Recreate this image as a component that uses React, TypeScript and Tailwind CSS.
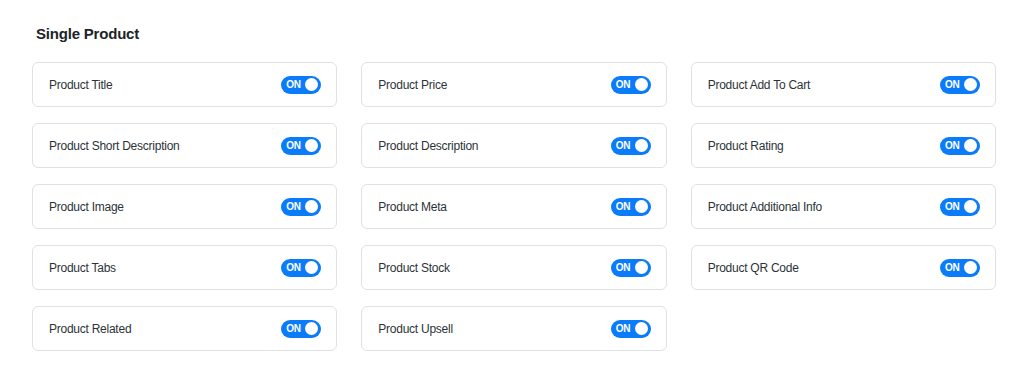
import React from 'react';

const items = [
  'Product Title',
  'Product Price',
  'Product Add To Cart',
  'Product Short Description',
  'Product Description',
  'Product Rating',
  'Product Image',
  'Product Meta',
  'Product Additional Info',
  'Product Tabs',
  'Product Stock',
  'Product QR Code',
  'Product Related',
  'Product Upsell',
];

const Toggle: React.FC = () => (
  <div className="flex h-[18px] w-10 items-center justify-between rounded-full bg-[#0b7cf9] pl-[5px] pr-[3px]">
    <span className="text-[10px] font-bold leading-none tracking-[-0.3px] text-white">ON</span>
    <span className="h-[13px] w-[13px] rounded-full bg-white" />
  </div>
);

export default function App() {
  return (
    <div className="min-h-screen bg-white px-8 pt-6 font-['Liberation_Sans',Arial,sans-serif]">
      {/* Заголовок */}
      <h2 className="mb-[18px] pl-1 text-[15px] font-bold leading-5 tracking-[-0.2px] text-[#1d2327]">Single Product</h2>

      <div className="grid grid-cols-3 gap-x-6 gap-y-4">
        {items.map((label) => (
          <div
            key={label}
            className="flex h-[45px] items-center justify-between rounded-md border border-[#dfe1e5] bg-white pl-4 pr-[15px]"
          >
            <span className="text-[12px] tracking-[-0.25px] text-[#2c3338]">{label}</span>
            <Toggle />
          </div>
        ))}
      </div>
    </div>
  );
}
